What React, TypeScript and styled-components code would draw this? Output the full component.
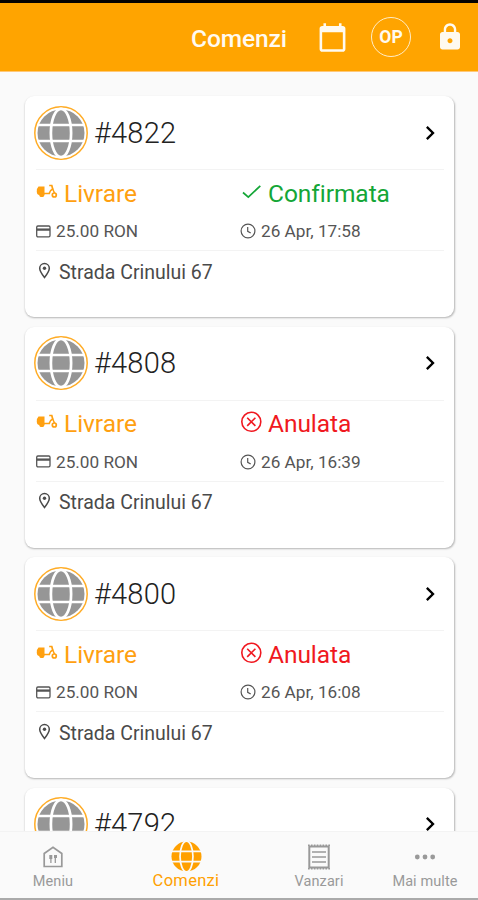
import React from 'react';
import styled, { createGlobalStyle } from 'styled-components';

const Global = createGlobalStyle`
  * { box-sizing: border-box; }
  body { margin: 0; background: #fafafa; font-family: Roboto, "Liberation Sans", sans-serif; }
  svg { display: block; flex: none; }
`;

const Screen = styled.div`
  width: 478px;
  height: 900px;
  display: flex;
  flex-direction: column;
  overflow: hidden;
  background: #fafafa;
  border-top: 3px solid #050200;
`;

const Header = styled.header`
  height: 69px;
  flex: none;
  display: flex;
  align-items: center;
  padding: 0 13px 0 191px;
  background: #ffa400;
  border-bottom: 1px solid #ffc877;
  color: #fffaf0;
`;

const Title = styled.h1`
  margin: 3px 0 0;
  width: 126px;
  font-size: 24.5px;
  line-height: 30px;
  font-weight: 500;
  letter-spacing: -0.1px;
`;

const Avatar = styled.div`
  width: 40px;
  height: 40px;
  margin: 0 24px 0 23px;
  display: flex;
  align-items: center;
  justify-content: center;
  border: 1.5px solid #ffedc8;
  border-radius: 50%;
  font-size: 17.5px;
  font-weight: 700;
`;

const List = styled.main`
  flex: 1;
  min-height: 0;
  overflow: hidden;
  padding: 24px 24px 0 25px;
`;

const Card = styled.article`
  height: 221px;
  margin-bottom: 9.5px;
  padding: 0 10px 0 11px;
  border-radius: 9px;
  background: #fff;
  box-shadow: 0.5px 1px 2px rgba(0, 0, 0, 0.28);
`;

const CardHead = styled.div`
  height: 73px;
  display: flex;
  align-items: center;
  margin-left: -2px;
`;

const OrderNumber = styled.span`
  flex: 1;
  margin-left: 6px;
  font-size: 29px;
  line-height: 34px;
  font-weight: 300;
  letter-spacing: 0.2px;
  color: #222;
`;

const Details = styled.div`
  height: 82px;
  display: grid;
  grid-template-columns: 204px 1fr;
  grid-template-rows: 47px 33px;
  border-top: 1px solid #f3f3f3;
  border-bottom: 1px solid #f3f3f3;
`;

const Status = styled.div<{ $color: string }>`
  display: flex;
  align-items: center;
  gap: 6px;
  color: ${(p) => p.$color};
  font-size: 24.5px;
  line-height: 30px;
  letter-spacing: -0.05px;
  svg { position: relative; top: -2px; }
`;

const Meta = styled.div`
  display: flex;
  align-items: center;
  height: 28px;
  gap: 5px;
  color: #555;
  font-size: 17.2px;
`;

const Address = styled.div`
  display: flex;
  align-items: center;
  height: 41px;
  padding-top: 1px;
  gap: 6px;
  color: #4a4a4a;
  font-size: 19.5px;
  svg { margin-top: -4px; }
`;

const Nav = styled.nav`
  height: 69px;
  flex: none;
  display: grid;
  grid-template-columns: 106px 160px 106px 106px;
  background: #fafafa;
  border-top: 1px solid #f3f3f3;
  border-bottom: 2px solid #aaa;
`;

const NavItem = styled.div<{ $active?: boolean }>`
  display: flex;
  flex-direction: column;
  align-items: center;
  padding-top: 9px;
  color: ${(p) => (p.$active ? '#ffa000' : '#999')};
  font-size: ${(p) => (p.$active ? 16.5 : 14.5)}px;
  letter-spacing: ${(p) => (p.$active ? 0.3 : 0.1)}px;
  line-height: ${(p) => (p.$active ? 18 : 20)}px;
`;

const NavIcon = styled.div`
  height: 31px;
  display: flex;
  align-items: center;
`;

type IconProps = { size: number; d: string };
const Glyph = ({ size, d }: IconProps) => (
  <svg width={size} height={size} viewBox="0 0 24 24" fill="currentColor"><path d={d} /></svg>
);

const CALENDAR = 'M20 3h-1V1h-2v2H7V1H5v2H4c-1.1 0-2 .9-2 2v16c0 1.1.9 2 2 2h16c1.1 0 2-.9 2-2V5c0-1.1-.9-2-2-2zm0 18H4V8h16v13z';
const LOCK = 'M18 8h-1V6c0-2.76-2.24-5-5-5S7 3.24 7 6v2H6c-1.1 0-2 .9-2 2v10c0 1.1.9 2 2 2h12c1.1 0 2-.9 2-2V10c0-1.1-.9-2-2-2zm-6 9c-1.1 0-2-.9-2-2s.9-2 2-2 2 .9 2 2-.9 2-2 2zm3.1-9H8.9V6c0-1.71 1.39-3.1 3.1-3.1 1.71 0 3.1 1.39 3.1 3.1v2z';
const CHEVRON = 'M10 6L8.59 7.41 13.17 12l-4.58 4.59L10 18l6-6z';

const GlobeShape = ({ r, line }: { r: number; line: string }) => (
  <g>
    <circle r={r} fill="currentColor" />
    <g fill="none" stroke={line} strokeWidth={r * 0.115}>
      <ellipse rx={r * 0.43} ry={r * 1.03} />
      <path d={`M${-r} ${-r * 0.34}H${r}M${-r} ${r * 0.34}H${r}`} />
    </g>
  </g>
);

const OrderGlobe = () => (
  <svg width="54" height="54" viewBox="-27 -27 54 54" color="#969696">
    <circle r="26.2" fill="#fff" stroke="#ffac25" strokeWidth="1.5" />
    <GlobeShape r={23.5} line="#fff" />
  </svg>
);

const Scooter = () => (
  <svg width="22" height="18" viewBox="0 0 22 18" fill="none" stroke="currentColor">
    <path d="M2.500 3.500H8.500V12H3.500C1.500 12 .8 10.500 .8 8.500Q.8 5 2.500 3.500z" fill="currentColor" stroke="none" />
    <path d="M3.200 11.500a2.600 2.600 0 0 0 5.200 0z" fill="currentColor" stroke="none" />
    <path d="M8 10.500h5.200q.5-3 3.500-4.500L15.800 2.500h-2.600" strokeWidth="1.700" />
    <path d="M16.500 5.500L18.500 10" strokeWidth="1.500" />
    <circle cx="18.300" cy="12" r="2" strokeWidth="1.700" />
  </svg>
);

const CardIcon = () => (
  <svg width="15" height="13" viewBox="0 0 15 13" fill="none" stroke="currentColor" strokeWidth="1.300">
    <rect x=".7" y="1" width="13.300" height="10.800" rx="1.200" />
    <path d="M1 4.600h13" strokeWidth="2.300" />
  </svg>
);

const Clock = () => (
  <svg width="16" height="16" viewBox="0 0 16 16" fill="none" stroke="currentColor" strokeWidth="1.200">
    <circle cx="8" cy="8" r="6.900" />
    <path d="M7.700 4v4.300l3 1.800" />
  </svg>
);

const Pin = () => (
  <svg width="17" height="17" viewBox="0 0 17 17" fill="none" stroke="currentColor" strokeWidth="1.500">
    <path d="M8.500 15.500C6.500 13 3.700 9.500 3.700 6.300a4.800 4.800 0 0 1 9.600 0C13.300 9.500 10.500 13 8.500 15.500z" />
    <circle cx="8.500" cy="6.300" r="1.700" fill="currentColor" stroke="none" />
  </svg>
);

const Check = () => (
  <svg width="22" height="22" viewBox="0 0 22 22" fill="none" stroke="currentColor" strokeWidth="1.700">
    <path d="M3 11.500L8.300 16.200L20.300 4.800" />
  </svg>
);

const Cancel = () => (
  <svg width="22" height="22" viewBox="0 0 22 22" fill="none" stroke="currentColor" strokeWidth="1.600">
    <circle cx="11.300" cy="10.800" r="9.500" />
    <path d="M7.200 6.700l8.200 8.200M15.400 6.700l-8.200 8.200" />
  </svg>
);

const Menu = () => (
  <svg width="22" height="24" viewBox="0 0 22 24" fill="none" stroke="currentColor" strokeWidth="1.700">
    <path d="M2.200 21.500V8.500L11 2.200l8.800 6.300v13z" />
    <path d="M8.900 10v8M13.300 10v8" strokeWidth="1.300" />
    <path d="M8.800 10v4M13.500 10v3" strokeWidth="3" />
  </svg>
);

const Receipt = () => (
  <svg width="24" height="26" viewBox="0 0 24 26" fill="none" stroke="currentColor" strokeWidth="1.500">
    <rect x="2.300" y="2.500" width="19.400" height="21" strokeWidth="2" />
    <path d="M1 1.300h22M1 24.700h22" strokeWidth="1.400" strokeDasharray="1.700 1.200" />
    <path d="M5 8h14M5 13h14M5 18h14" />
  </svg>
);

const Dots = () => (
  <svg width="22" height="6" viewBox="0 0 22 6" fill="currentColor">
    <circle cx="3.300" cy="3" r="2.400" /><circle cx="11" cy="3" r="2.400" /><circle cx="18.700" cy="3" r="2.400" />
  </svg>
);

type Order = { id: number; time?: string; confirmed?: boolean };

const orders: Order[] = [
  { id: 4822, time: '26 Apr, 17:58', confirmed: true },
  { id: 4808, time: '26 Apr, 16:39' },
  { id: 4800, time: '26 Apr, 16:08' },
  { id: 4792 },
];

export default function App() {
  return (
    <>
      <Global />
      <Screen>
        <Header>
          <Title>Comenzi</Title>
          <Glyph size={31} d={CALENDAR} />
          <Avatar>OP</Avatar>
          <Glyph size={30} d={LOCK} />
        </Header>
        <List>
          {orders.map((o) => (
            <Card key={o.id}>
              <CardHead>
                <OrderGlobe />
                <OrderNumber>#{o.id}</OrderNumber>
                <Glyph size={28} d={CHEVRON} />
              </CardHead>
              {o.time && (
                <>
                  <Details>
                    <Status $color="#ffa010"><Scooter />Livrare</Status>
                    <Status $color={o.confirmed ? '#14a637' : '#f01820'}>
                      {o.confirmed ? <Check /> : <Cancel />}
                      {o.confirmed ? 'Confirmata' : 'Anulata'}
                    </Status>
                    <Meta><CardIcon />25.00 RON</Meta>
                    <Meta><Clock />{o.time}</Meta>
                  </Details>
                  <Address><Pin />Strada Crinului 67</Address>
                </>
              )}
            </Card>
          ))}
        </List>
        <Nav>
          <NavItem><NavIcon><Menu /></NavIcon>Meniu</NavItem>
          <NavItem $active>
            <NavIcon>
              <svg width="31" height="31" viewBox="-15.500 -15.500 31 31"><GlobeShape r={15} line="#fafafa" /></svg>
            </NavIcon>
            Comenzi
          </NavItem>
          <NavItem><NavIcon><Receipt /></NavIcon>Vanzari</NavItem>
          <NavItem><NavIcon><Dots /></NavIcon>Mai multe</NavItem>
        </Nav>
      </Screen>
    </>
  );
}
